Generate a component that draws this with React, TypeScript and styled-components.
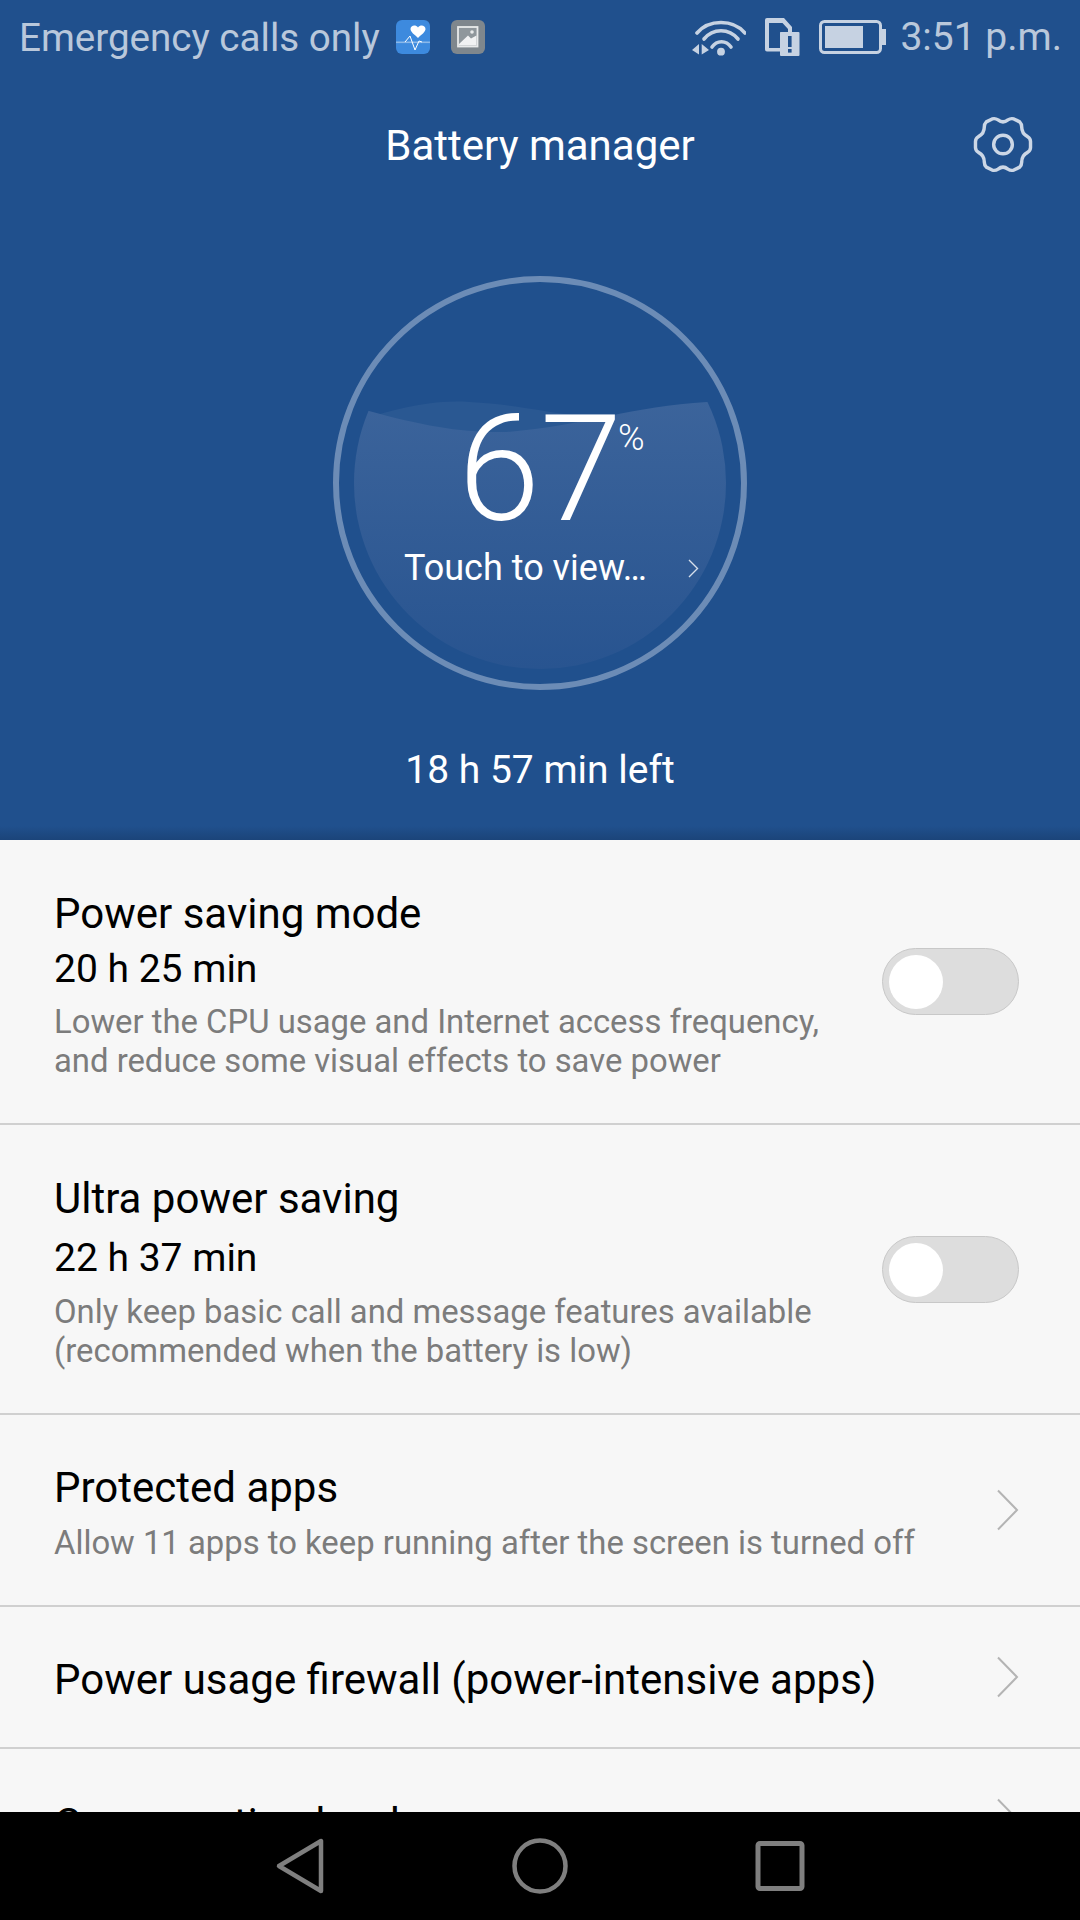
import React from 'react';
import styled, { createGlobalStyle } from 'styled-components';

const GlobalStyle = createGlobalStyle`
  html, body {
    margin: 0;
    padding: 0;
    background: #000;
  }
  * {
    box-sizing: border-box;
  }
`;

const Screen = styled.div`
  width: 1080px;
  height: 1920px;
  display: flex;
  flex-direction: column;
  overflow: hidden;
  font-family: Roboto, "Liberation Sans", sans-serif;
`;

// Blue top part
const Hero = styled.header`
  height: 840px;
  flex-shrink: 0;
  display: flex;
  flex-direction: column;
  background: linear-gradient(to bottom, #20508d 0, #20508d 826px, #1b4479 840px);
`;

const StatusBar = styled.div`
  height: 74px;
  padding: 0 18px 0 19px;
  display: flex;
  align-items: center;
  color: rgba(255, 255, 255, 0.7);
  font-size: 38.6px;
`;

const Carrier = styled.span`
  margin-right: 16px;
`;

const NotifIcon = styled.svg`
  width: 34px;
  height: 34px;
  margin-right: 21px;
  flex-shrink: 0;
`;

const StatusRight = styled.div`
  margin-left: auto;
  display: flex;
  align-items: center;
  gap: 19px;
`;

const StatusTime = styled.span`
  margin-left: -6px;
  font-size: 39px;
`;

const TitleBar = styled.div`
  height: 142px;
  padding: 0 47px;
  display: grid;
  grid-template-columns: 1fr auto 1fr;
  align-items: center;
  color: #fff;
  font-size: 42px;
`;

const GearSlot = styled.div`
  display: flex;
  justify-content: flex-end;
  margin-top: -2px;
`;

const Gauge = styled.div`
  position: relative;
  width: 414px;
  height: 414px;
  margin: 60px auto 0;
  display: flex;
  flex-direction: column;
  align-items: center;
`;

const GaugeArt = styled.svg`
  position: absolute;
  inset: 0;
`;

const Percent = styled.div`
  position: relative;
  margin-top: 129px;
  color: #fff;
  font-weight: 300;
  font-size: 148px;
  line-height: 130px;
  height: 130px;
`;

const PercentSign = styled.span`
  position: absolute;
  left: 100%;
  top: 15px;
  margin-left: -4px;
  font-size: 36px;
  line-height: 36px;
  font-weight: 300;
`;

const TouchRow = styled.div`
  position: relative;
  margin-top: 11px;
  width: 100%;
  padding-left: 71px;
  display: flex;
  align-items: center;
  color: #fff;
  font-size: 36px;
  line-height: 44px;
`;

const TouchChevron = styled.svg`
  margin-left: 41px;
  width: 11px;
  height: 19px;
`;

const TimeLeft = styled.div`
  margin-top: 58px;
  text-align: center;
  color: #fff;
  font-size: 39px;
  line-height: 44px;
`;

// Settings list
const List = styled.main`
  flex: 1;
  min-height: 0;
  overflow: hidden;
  background: #f7f7f7;
`;

const Row = styled.div<{ $height: number }>`
  height: ${p => p.$height}px;
  padding: 0 61px 0 54px;
  display: flex;
  align-items: center;
  justify-content: space-between;
  border-bottom: 2px solid #d0d0d0;
`;

const RowText = styled.div<{ $nudge?: number }>`
  display: flex;
  flex-direction: column;
  margin-top: ${p => p.$nudge ?? 0}px;
`;

const RowTitle = styled.div`
  color: #000;
  font-size: 42px;
  line-height: 54px;
`;

const RowValue = styled.div<{ $top?: number }>`
  color: #000;
  font-size: 39px;
  line-height: 58px;
  margin-top: ${p => p.$top ?? 0}px;
  margin-bottom: 6px;
`;

const RowHint = styled.div<{ $top?: number }>`
  color: #7c7c7c;
  font-size: 32.85px;
  line-height: 39px;
  white-space: pre-line;
  margin-top: ${p => p.$top ?? 0}px;
`;

const Toggle = styled.div`
  width: 137px;
  height: 67px;
  padding: 6px;
  border-radius: 34px;
  background: #dddddd;
  border: 1px solid #c8c8c8;
  flex-shrink: 0;
`;

const Knob = styled.div`
  width: 54px;
  height: 54px;
  border-radius: 50%;
  background: #fff;
`;

const RowChevron = styled.svg`
  width: 22px;
  height: 42px;
  flex-shrink: 0;
`;

// Android nav buttons
const NavBar = styled.nav`
  height: 108px;
  flex-shrink: 0;
  background: #000;
  display: flex;
  align-items: center;
  justify-content: center;
  gap: 184px;
`;

const NavIcon = styled.svg`
  width: 56px;
  height: 58px;
`;

const Chevron = () => (
  <RowChevron viewBox="0 0 22 42">
    <path d="M1 1.5 L20 21 L1 40.5" fill="none" stroke="#b4b4b4" strokeWidth="2" />
  </RowChevron>
);

const SwitchOff = () => (
  <Toggle>
    <Knob />
  </Toggle>
);

const App: React.FC = () => {
  return (
    <Screen>
      <GlobalStyle />
      <Hero>
        <StatusBar>
          <Carrier>Emergency calls only</Carrier>
          <NotifIcon viewBox="0 0 34 34">
            <rect width="34" height="34" rx="6" fill="#3d8ade" />
            <rect y="21.5" width="34" height="1.6" fill="#8ab8ea" />
            <path d="M22 18 C18 14 14.5 12 14.5 9 C14.5 5.5 19.5 4 22 7.5 C24.5 4 29.5 5.5 29.5 9 C29.5 12 26 14 22 18 Z" fill="#fff" />
            <path d="M9 22 L14 16 L19 30 L23 21 L26 22" fill="none" stroke="#fff" strokeWidth="1" />
          </NotifIcon>
          <NotifIcon viewBox="0 0 34 34">
            <rect width="34" height="34" rx="6" fill="#7f878d" />
            <rect x="7" y="7" width="19.5" height="19.5" fill="#8f979c" stroke="#e8eaeb" strokeWidth="1.8" />
            <path d="M8 25.5 L8 24 L17 15.5 L20 18.5 L25.5 15.5 L25.5 25.5 Z" fill="#f1f2f3" />
            <circle cx="21" cy="12" r="1.8" fill="#e8eaeb" />
          </NotifIcon>
          <StatusRight>
            <svg width="54" height="38" viewBox="0 0 54 38">
              <path d="M5 13 C17 -1 41 -1 53 13" fill="none" stroke="#c6d2e2" strokeWidth="3.6" strokeLinecap="round" transform="translate(0 2)" />
              <path d="M12 21 C21 10 37 10 46 21" fill="none" stroke="#c6d2e2" strokeWidth="3.6" strokeLinecap="round" />
              <path d="M20 29 C25 22 34 22 39 29" fill="none" stroke="#c6d2e2" strokeWidth="3.6" strokeLinecap="round" />
              <circle cx="29" cy="33.7" r="3.9" fill="#c6d2e2" />
              <path d="M0 32 L7 26 L7 36.5 Z M9.7 26 L17 32 L9.7 36.5 Z" fill="#c6d2e2" />
            </svg>
            <svg width="35" height="38" viewBox="0 0 35 38">
              <path d="M2 0 L19 0 L27 9 L27 15 L15 15 L15 33.5 L2 33.5 Q0 33.5 0 31.5 L0 2 Q0 0 2 0 Z" fill="#c6d2e2" />
              <path d="M4 5 L17.5 5 L23 11 L23 14.5 L15 14.5 L15 30 L4 30 Z" fill="#20508d" />
              <rect x="15" y="14" width="19.5" height="24" rx="1" fill="#c6d2e2" />
              <rect x="23" y="18" width="3.6" height="11" fill="#20508d" />
              <rect x="23" y="31" width="3.6" height="3.6" fill="#20508d" />
            </svg>
            <svg width="68" height="34" viewBox="0 0 68 34">
              <rect x="1.5" y="1.5" width="60" height="31" rx="4" fill="none" stroke="#c6d2e2" strokeWidth="3" />
              <rect x="6" y="6" width="38" height="22" fill="#c6d2e2" />
              <rect x="63" y="9" width="4" height="16" fill="#c6d2e2" />
            </svg>
            <StatusTime>3:51 p.m.</StatusTime>
          </StatusRight>
        </StatusBar>
        <TitleBar>
          <span />
          <span>Battery manager</span>
          <GearSlot>
            <svg width="60" height="57" viewBox="0 0 60 58">
              <path
                d="M19 3 Q22 2 25 4 Q30 8 35 4 Q38 2 41 3 L47 6 Q49 8 49 11 Q49 18 55 21 Q58 23 58 26 L58 32 Q58 35 55 37 Q49 40 49 47 Q49 50 47 52 L41 55 Q38 56 35 54 Q30 50 25 54 Q22 56 19 55 L13 52 Q11 50 11 47 Q11 40 5 37 Q2 35 2 32 L2 26 Q2 23 5 21 Q11 18 11 11 Q11 8 13 6 Z"
                fill="none"
                stroke="#ccd7e6"
                strokeWidth="3.5"
                strokeLinejoin="round"
              />
              <circle cx="30" cy="29" r="9.5" fill="none" stroke="#ccd7e6" strokeWidth="3.5" />
            </svg>
          </GearSlot>
        </TitleBar>
        <Gauge>
          <GaugeArt width="414" height="414" viewBox="0 0 414 414">
            <defs>
              <linearGradient id="water" x1="0" y1="0" x2="0" y2="1">
                <stop offset="0" stopColor="#3c649b" />
                <stop offset="1" stopColor="#285490" />
              </linearGradient>
              <clipPath id="bowl">
                <circle cx="207" cy="207" r="186" />
              </clipPath>
            </defs>
            <circle cx="207" cy="207" r="204" fill="none" stroke="#6c8cb6" strokeWidth="6" />
            <g clipPath="url(#bowl)">
              <path d="M40 140 C80 128 110 124 137 126 C180 128 210 136 250 140 L250 200 L40 200 Z" fill="#2a5892" />
              <path d="M10 125 L36 135 C90 150 130 157 174 156 C250 150 300 130 374 126 L414 120 L414 393 L0 393 Z" fill="url(#water)" />
            </g>
          </GaugeArt>
          <Percent>
            67
            <PercentSign>%</PercentSign>
          </Percent>
          <TouchRow>
            Touch to view…
            <TouchChevron viewBox="0 0 11 19">
              <path d="M1 1 L9.5 9.5 L1 18" fill="none" stroke="#d6dfeb" strokeWidth="1.4" />
            </TouchChevron>
          </TouchRow>
        </Gauge>
        <TimeLeft>18 h 57 min left</TimeLeft>
      </Hero>
      <List>
        <Row $height={285}>
          <RowText $nudge={5}>
            <RowTitle>Power saving mode</RowTitle>
            <RowValue $top={-1}>20 h 25 min</RowValue>
            <RowHint $top={-1}>{'Lower the CPU usage and Internet access frequency,\nand reduce some visual effects to save power'}</RowHint>
          </RowText>
          <SwitchOff />
        </Row>
        <Row $height={290}>
          <RowText $nudge={4}>
            <RowTitle>Ultra power saving</RowTitle>
            <RowValue $top={3}>22 h 37 min</RowValue>
            <RowHint>{'Only keep basic call and message features available\n(recommended when the battery is low)'}</RowHint>
          </RowText>
          <SwitchOff />
        </Row>
        <Row $height={192}>
          <RowText $nudge={3}>
            <RowTitle>Protected apps</RowTitle>
            <RowHint $top={9}>Allow 11 apps to keep running after the screen is turned off</RowHint>
          </RowText>
          <Chevron />
        </Row>
        <Row $height={142}>
          <RowText $nudge={6}>
            <RowTitle>Power usage firewall (power-intensive apps)</RowTitle>
          </RowText>
          <Chevron />
        </Row>
        <Row $height={142}>
          <RowText $nudge={10}>
            <RowTitle>Consumption level</RowTitle>
          </RowText>
          <Chevron />
        </Row>
      </List>
      <NavBar>
        <NavIcon viewBox="0 0 56 58">
          <path d="M49 4 L49 54 L7 29 Z" fill="none" stroke="#7f7f7f" strokeWidth="4.5" strokeLinejoin="round" />
        </NavIcon>
        <NavIcon viewBox="0 0 56 58">
          <circle cx="28" cy="29" r="25.5" fill="none" stroke="#7f7f7f" strokeWidth="4.5" />
        </NavIcon>
        <NavIcon viewBox="0 0 56 58">
          <rect x="6" y="6.5" width="44" height="45" rx="2" fill="none" stroke="#7f7f7f" strokeWidth="5" />
        </NavIcon>
      </NavBar>
    </Screen>
  );
};

export default App;
